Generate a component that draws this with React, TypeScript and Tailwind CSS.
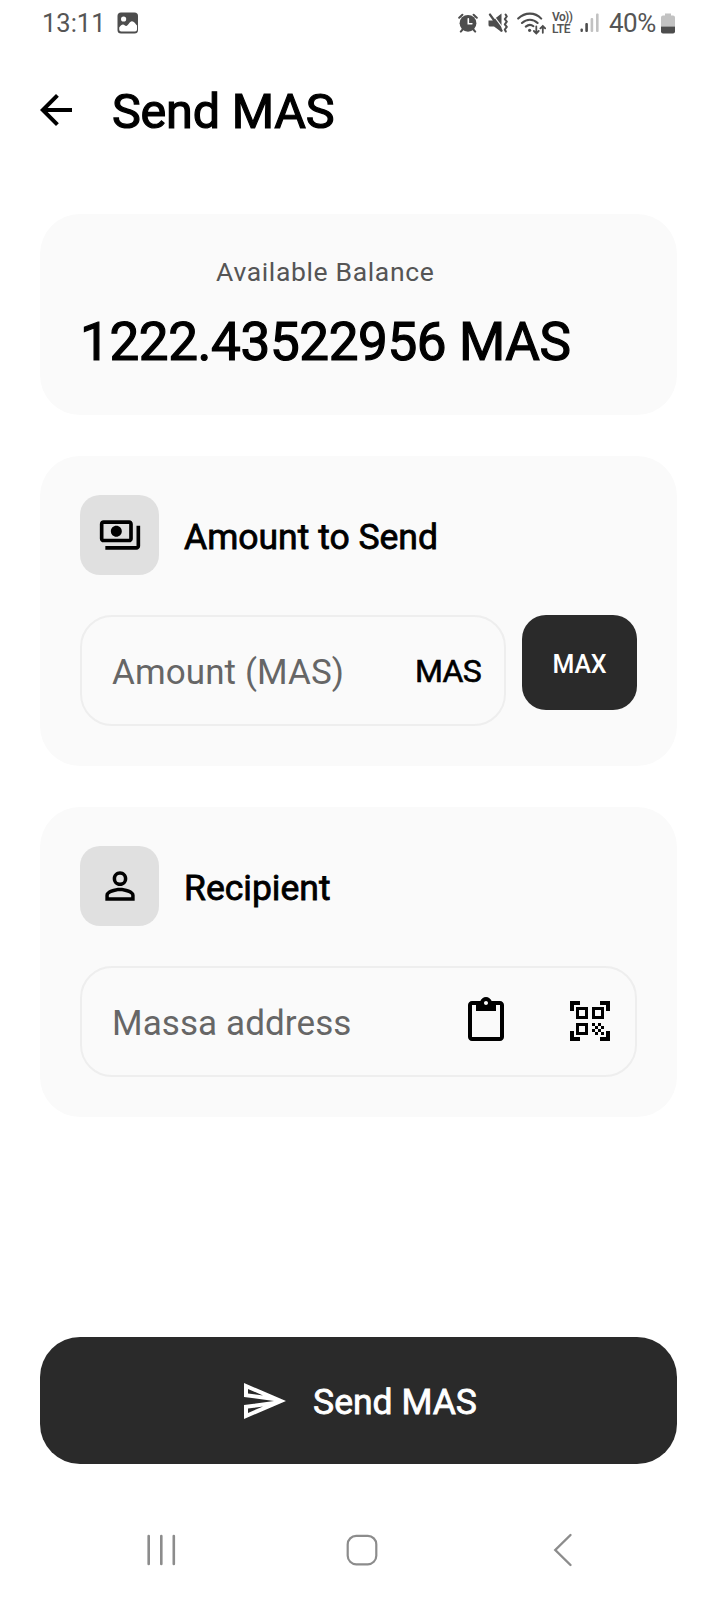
import React from 'react';
import {
  MdArrowBack,
  MdContentPaste,
  MdOutlinePayments,
  MdOutlineSend,
  MdPersonOutline,
  MdQrCodeScanner,
} from 'react-icons/md';

const StatusBar: React.FC = () => (
  <div className="flex h-[46px] items-center justify-between pl-[42px] pr-[42px] text-[#555]">
    <div className="flex items-center">
      <span className="w-[75px] pt-0.5 text-[25.5px] leading-none">13:11</span>
      <svg width="22" height="22" viewBox="0 0 22 22">
        <rect x="0.5" y="0.5" width="20.5" height="21" rx="3.5" fill="#4d4d4d" />
        <circle cx="6.6" cy="7" r="2.6" fill="#fff" />
        <path
          d="M2.2 15.5C3.5 13.5 4.8 12.4 6 12.4c1.3 0 2 1.6 3.2 1.6C11 14 12.5 9.2 15 9.2c2 0 3.6 2.6 5 4.3v4a2 2 0 0 1-2 2H4.2a2 2 0 0 1-2-2z"
          fill="#fff"
        />
      </svg>
    </div>
    <div className="flex items-center">
      {/* alarm */}
      <svg className="mr-[10px]" width="20" height="20" viewBox="0 0 20 20" fill="none" stroke="#4d4d4d" strokeWidth="2" strokeLinecap="round">
        <circle cx="10" cy="10.3" r="8.4" fill="#4d4d4d" stroke="none" />
        <path d="M1.2 4.8L4.4 1.8M18.8 4.8L15.6 1.8M4.6 16.5L2.8 18.6M15.4 16.5L17.2 18.6" />
        <path d="M10.3 5.8v5h3.6" stroke="#fff" strokeWidth="1.6" />
      </svg>
      {/* vibrate / muted */}
      <svg className="mr-[9px]" width="20" height="20" viewBox="0 0 20 20" fill="none" stroke="#4d4d4d">
        <path d="M0.5 7.5h4L13.5 0.5v18.5L6 13.5H2a1.5 1.5 0 0 1-1.5-1.5z" fill="#4d4d4d" stroke="none" />
        <path d="M4 0.5l12 16" stroke="#fff" strokeWidth="1.2" />
        <path d="M2 1.6l11.5 16" strokeWidth="2.4" strokeLinecap="round" />
        <path d="M17.6 1.5l1.2 2-2 2.6 2 2.6-2 2.6 2 2.6-2 2.6 1 2" strokeWidth="2" strokeLinejoin="round" strokeLinecap="round" />
      </svg>
      {/* wifi */}
      <svg className="mr-[6px]" width="29" height="23" viewBox="0 0 29 23" fill="none" stroke="#4d4d4d" strokeWidth="2.1" strokeLinecap="round">
        <path d="M1.2 6.6C8 0 18 0 24.2 6.6M5 11c4.6-4.4 11.2-4.4 15.6 0M8.8 14.6c2.6-2.2 5.4-2.2 7.6-0.4" />
        <circle cx="12.6" cy="18.3" r="1.6" fill="#4d4d4d" stroke="none" />
        <path d="M19.3 14.5v6.8M16.9 19l2.4 2.4 2.4-2.4M25.8 20.8v-6.8M23.4 16.4l2.4-2.4 2.4 2.4" strokeWidth="1.8" />
      </svg>
      <div className="mr-[7px] w-[21px] whitespace-nowrap pt-px text-[12px] font-semibold leading-[11.5px]">
        <div className="tracking-[-0.6px]">Vo))</div>
        <div className="tracking-[-0.3px]">LTE</div>
      </div>
      <svg className="mr-[10px]" width="19" height="20" viewBox="0 0 19 20">
        <rect x="0.5" y="15.5" width="2.4" height="3.5" rx="1" fill="#4d4d4d" />
        <rect x="5.3" y="10" width="2.6" height="9" rx="1" fill="#4d4d4d" />
        <rect x="10.6" y="5" width="2.6" height="14" rx="1" fill="#c2c2c2" />
        <rect x="16" y="0.5" width="2.6" height="18.5" rx="1" fill="#c2c2c2" />
      </svg>
      <span className="mr-[4px] w-[48px] text-[26px] leading-none tracking-[-0.5px]">40%</span>
      <svg width="14" height="21" viewBox="0 0 14 21">
        <path d="M4 0.5h6v2h2a2 2 0 0 1 2 2v9H0v-9a2 2 0 0 1 2-2h2z" fill="#c2c2c2" />
        <path d="M0 13.5h14v5a2 2 0 0 1-2 2H2a2 2 0 0 1-2-2z" fill="#4d4d4d" />
      </svg>
    </div>
  </div>
);

interface SectionProps {
  icon: React.ReactNode;
  title: string;
  children: React.ReactNode;
}

const Section: React.FC<SectionProps> = ({ icon, title, children }) => (
  <section className="h-[310px] rounded-[40px] bg-[#fafafa] px-10 pt-[39px]">
    <div className="flex items-center gap-[25px]">
      <div className="flex h-20 w-[79px] items-center justify-center rounded-[20px] bg-[#e0e0e0] pb-px">{icon}</div>
      <h2 className="pt-[5px] text-[35.5px] leading-none [-webkit-text-stroke:0.8px_black]">{title}</h2>
    </div>
    <div className="mt-10 flex items-start">{children}</div>
  </section>
);

const NavBar: React.FC = () => (
  <div className="flex h-[100px] items-center pl-[146px]">
    <svg width="32" height="32" viewBox="0 0 32 32" stroke="#8c8c8c" strokeWidth="2.6" strokeLinecap="round">
      <path d="M2.7 2v28M15.3 2v28M27.8 2v28" />
    </svg>
    <svg className="ml-[168px]" width="32" height="32" viewBox="0 0 32 32" fill="none" stroke="#8c8c8c" strokeWidth="2.2">
      <rect x="1.7" y="1.9" width="28.6" height="28.4" rx="8.5" />
    </svg>
    <svg className="ml-[175px]" width="20" height="34" viewBox="0 0 20 34" fill="none" stroke="#8c8c8c" strokeWidth="2.4" strokeLinecap="round">
      <path d="M17.5 2L2.3 17l15.2 15" />
    </svg>
  </div>
);

const App: React.FC = () => {
  return (
    <div className="flex h-[1600px] w-[717px] flex-col bg-white font-[Roboto,sans-serif] text-black">
      <StatusBar />

      <header className="flex h-[128px] items-center gap-8 pl-8">
        <MdArrowBack className="size-12" />
        <h1 className="pt-[5px] text-[48.5px] leading-none tracking-[-0.2px] [-webkit-text-stroke:1.2px_black]">Send MAS</h1>
      </header>

      <main className="flex flex-col gap-[41px] px-10 pt-10">
        <section className="flex h-[201px] items-start rounded-[40px] bg-[#fafafa] px-10 pt-10">
          <div className="flex flex-col items-center">
            <p className="text-[26.5px] leading-[36px] tracking-[0.65px] text-[#555]">Available Balance</p>
            <p className="mt-[17px] whitespace-nowrap text-[53px] leading-[70px] tracking-[-0.4px] [-webkit-text-stroke:1.2px_black]">
              1222.43522956 MAS
            </p>
          </div>
        </section>

        <Section icon={<MdOutlinePayments className="size-11" />} title="Amount to Send">
          <div className="flex h-[111px] w-[426px] items-center justify-between rounded-[32px] border-2 border-[#eee] pl-[30px] pr-[23px]">
            <span className="pt-1.5 text-[35px] tracking-[0.1px] text-[#666]">Amount (MAS)</span>
            <span className="pt-px text-[32px] tracking-[-0.7px] [-webkit-text-stroke:0.6px_black]">MAS</span>
          </div>
          <button className="ml-4 h-[95px] w-[115px] rounded-[24px] bg-[#2a2a2a] pt-1 text-[25px] font-medium tracking-[-0.2px] text-white">
            MAX
          </button>
        </Section>

        <Section icon={<MdPersonOutline className="size-11" />} title="Recipient">
          <div className="flex h-[111px] w-full items-center rounded-[32px] border-2 border-[#eee] pl-[30px] pr-[21px]">
            <span className="pt-1.5 text-[35px] tracking-[0.1px] text-[#666]">Massa address</span>
            <MdContentPaste className="mb-px ml-auto size-12" />
            <MdQrCodeScanner className="mb-px ml-14 size-12" />
          </div>
        </Section>
      </main>

      <div className="mt-auto px-10 pb-9">
        <button className="flex h-[127px] w-full items-center justify-center gap-[25px] rounded-[40px] bg-[#2a2a2a] text-white">
          <MdOutlineSend className="size-12" />
          <span className="pt-[5px] text-[35.5px] leading-none [-webkit-text-stroke:0.8px_white]">Send MAS</span>
        </button>
      </div>

      <NavBar />
    </div>
  );
};

export default App;
